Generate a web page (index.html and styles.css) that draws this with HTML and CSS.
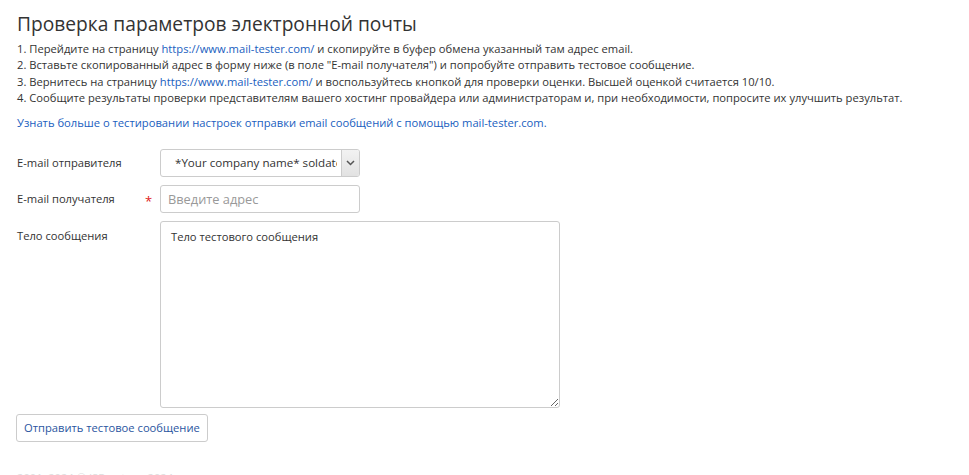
FILE: index.html
```html
<!DOCTYPE html>
<html lang="ru">
<head>
<meta charset="utf-8">
<title>Проверка параметров электронной почты</title>
<link rel="stylesheet" href="styles.css">
</head>
<body>
<div class="page">
  <h1 class="title">Проверка параметров электронной почты</h1>
  <div class="steps">
    <div>1. Перейдите на страницу <a href="#">https://www.mail-tester.com/</a> и скопируйте в буфер обмена указанный там адрес email.</div>
    <div>2. Вставьте скопированный адрес в форму ниже (в поле "E-mail получателя") и попробуйте отправить тестовое сообщение.</div>
    <div>3. Вернитесь на страницу <a href="#">https://www.mail-tester.com/</a> и воспользуйтесь кнопкой для проверки оценки. Высшей оценкой считается 10/10.</div>
    <div>4. Сообщите результаты проверки представителям вашего хостинг провайдера или администраторам и, при необходимости, попросите их улучшить результат.</div>
  </div>
  <p class="more"><a href="#">Узнать больше о тестировании настроек отправки email сообщений с помощью mail-tester.com.</a></p>

  <form class="form">
    <div class="row">
      <label class="label">E-mail отправителя</label>
      <div class="select">
        <select class="select-input">
          <option>*Your company name* soldatov@example.com</option>
        </select>
        <span class="select-arrow">
          <svg width="9" height="6" viewBox="0 0 9 6"><path d="M1 1 L4.5 4.5 L8 1" fill="none" stroke="#555" stroke-width="1.5"/></svg>
        </span>
      </div>
    </div>
    <div class="row">
      <label class="label">E-mail получателя <span class="req">*</span></label>
      <input class="input" type="text" placeholder="Введите адрес">
    </div>
    <div class="row">
      <label class="label label-top">Тело сообщения</label>
      <textarea class="textarea">Тело тестового сообщения</textarea>
    </div>
    <div class="actions">
      <button type="button" class="btn">Отправить тестовое сообщение</button>
    </div>
  </form>
  <div class="footer">2001–2024 © ISPsystem, 2024</div>
</div>
</body>
</html>
```

FILE: styles.css
```css
html, body {
  margin: 0;
  padding: 0;
  background: #fff;
}
body {
  font-family: "Open Sans", "Noto Sans", sans-serif;
  font-size: 11.2px;
  color: #333;
}
.page {
  padding: 0 17px;
  height: 475px;
  overflow: hidden;
}
.title {
  font-size: 19.2px;
  font-weight: 400;
  margin: 0;
  padding-top: 10px;
  line-height: 28px;
  color: #333;
}
.steps {
  margin-top: 3px;
  line-height: 16.4px;
}
a {
  color: #2060c0;
  text-decoration: none;
}
.more {
  margin: 8px 0 0;
  line-height: 16px;
}
.form {
  margin-top: 18px;
  display: flex;
  flex-direction: column;
  gap: 8px;
}
.row {
  display: flex;
  align-items: center;
}
.label {
  width: 143px;
  flex: none;
  position: relative;
}
.label-top {
  align-self: flex-start;
  padding-top: 7px;
}
.req {
  position: absolute;
  left: 128px;
  top: 1px;
  color: #e02020;
  font-size: 13px;
}
.select {
  width: 200px;
  height: 28px;
  box-sizing: border-box;
  border: 1px solid #ccc;
  border-radius: 3px;
  display: flex;
  overflow: hidden;
  background: #fff;
}
.select-input {
  flex: 1;
  min-width: 0;
  appearance: none;
  -webkit-appearance: none;
  border: 0;
  background: transparent;
  font-family: inherit;
  font-size: 11.6px;
  color: #333;
  padding: 0 4px 0 14px;
  outline: none;
}
.select-arrow {
  width: 17px;
  flex: none;
  border-left: 1px solid #ccc;
  background: linear-gradient(#f2f2f2, #e2e2e2);
  display: flex;
  align-items: center;
  justify-content: center;
}
.input {
  width: 200px;
  height: 28px;
  box-sizing: border-box;
  border: 1px solid #ccc;
  border-radius: 3px;
  padding: 0 7px;
  font-family: inherit;
  font-size: 12.8px;
  color: #333;
  outline: none;
}
.input::placeholder {
  color: #999;
}
.textarea {
  width: 400px;
  height: 187px;
  box-sizing: border-box;
  border: 1px solid #ccc;
  border-radius: 3px;
  padding: 7px 10px;
  font-family: inherit;
  font-size: 11.2px;
  color: #333;
  margin: 0;
  outline: none;
}
.actions {
  margin-top: -2px;
}
.btn {
  height: 28px;
  padding: 0 7px;
  margin-left: -1px;
  border: 1px solid #ccc;
  border-radius: 3px;
  background: #fff;
  font-family: inherit;
  font-size: 11.2px;
  color: #2a55a0;
  cursor: pointer;
}
.footer {
  margin-top: 28px;
  color: #ddd;
  font-size: 11.2px;
}
```
